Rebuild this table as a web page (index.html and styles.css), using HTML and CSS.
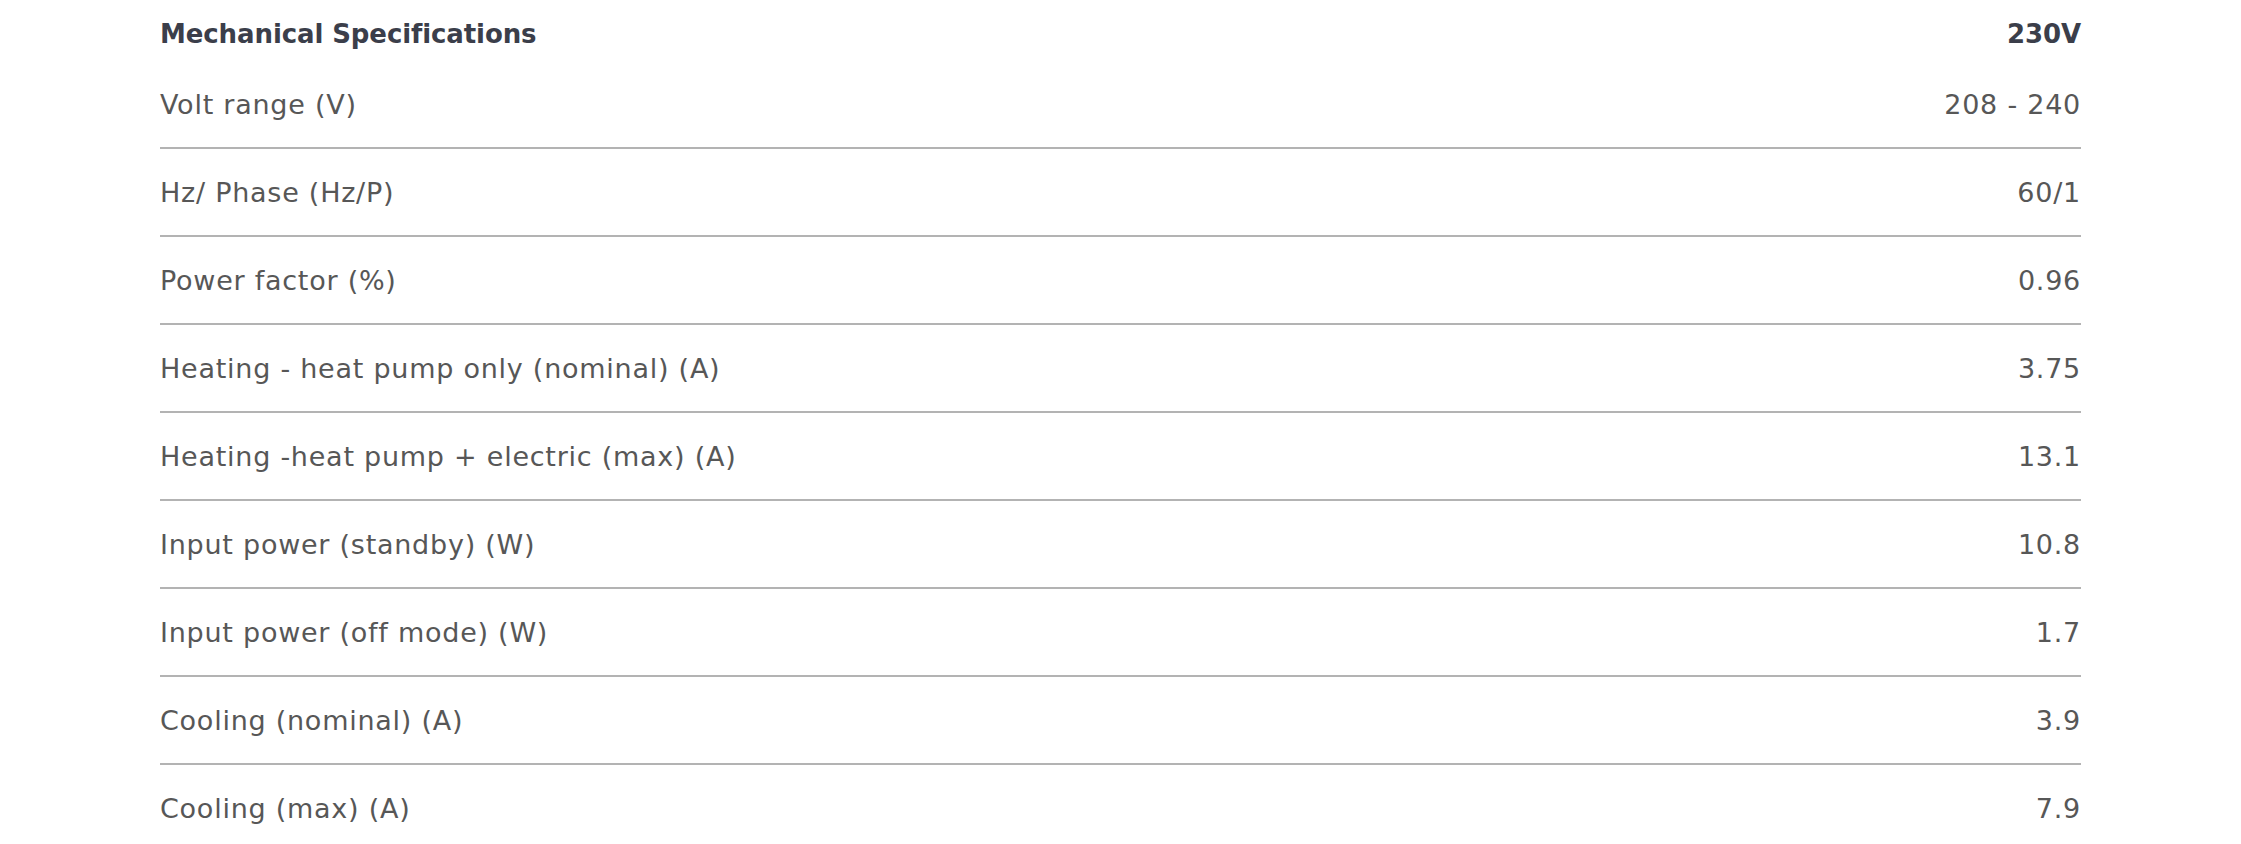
FILE: index.html
```html
<!DOCTYPE html>
<html lang="en">
<head>
<meta charset="utf-8">
<title>Mechanical Specifications</title>
<link rel="stylesheet" href="styles.css">
</head>
<body>
<section class="specs">
  <div class="specs-head">
    <span class="specs-title">Mechanical Specifications</span>
    <span class="specs-title">230V</span>
  </div>
  <div class="spec-row"><span>Volt range (V)</span><span>208 - 240</span></div>
  <div class="spec-row"><span>Hz/ Phase (Hz/P)</span><span>60/1</span></div>
  <div class="spec-row"><span>Power factor (%)</span><span>0.96</span></div>
  <div class="spec-row"><span>Heating - heat pump only (nominal) (A)</span><span>3.75</span></div>
  <div class="spec-row"><span>Heating -heat pump + electric (max) (A)</span><span>13.1</span></div>
  <div class="spec-row"><span>Input power (standby) (W)</span><span>10.8</span></div>
  <div class="spec-row"><span>Input power (off mode) (W)</span><span>1.7</span></div>
  <div class="spec-row"><span>Cooling (nominal) (A)</span><span>3.9</span></div>
  <div class="spec-row"><span>Cooling (max) (A)</span><span>7.9</span></div>
</section>
</body>
</html>
```
FILE: styles.css
```css
html, body {
  margin: 0;
  padding: 0;
  background: #ffffff;
}
body {
  font-family: "DejaVu Sans", Inter, "Liberation Sans", sans-serif;
}
.specs {
  margin: 0 160px 0 160px;
}
.specs-head {
  display: flex;
  justify-content: space-between;
  align-items: center;
  height: 61px;
  padding-top: 7px;
  box-sizing: border-box;
}
.specs-title {
  font-size: 26px;
  font-weight: 700;
  color: #3b3e4a;
  letter-spacing: -0.1px;
}
.spec-row {
  display: flex;
  justify-content: space-between;
  align-items: center;
  height: 86px;
  border-bottom: 2px solid #b3b3b3;
  font-size: 27px;
  font-weight: 400;
  color: #575757;
  letter-spacing: 0.75px;
}
.spec-row:last-child {
  border-bottom: none;
}
```
